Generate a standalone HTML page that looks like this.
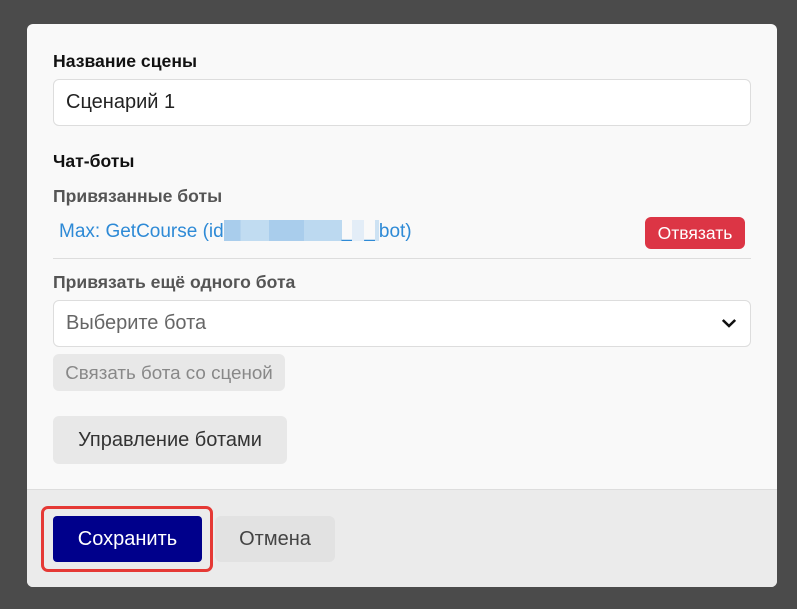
<!DOCTYPE html>
<html><head><meta charset="utf-8"><style>
html,body{margin:0;padding:0;width:797px;height:609px;background:#4b4b4b;overflow:hidden;font-family:"Liberation Sans",Arial,sans-serif}
.m{position:absolute;left:27px;top:24px;width:750px;height:563px;background:#f9f9f9;border-radius:6px;overflow:hidden}
.a{position:absolute;white-space:nowrap}
.lbl{font-weight:bold;font-size:17.6px;color:#111}
.lbl2{font-weight:bold;font-size:17.6px;color:#555}
.inp{background:#fff;border:1px solid #ddd;border-radius:6px;box-sizing:border-box}
.foot{position:absolute;left:0;top:465px;width:750px;height:98px;background:#ebebeb;border-top:1px solid #ddd}
</style></head><body>
<div class="m">
<div class="a lbl" style="left:26px;top:27px">Название сцены</div>
<div class="a inp" style="left:26px;top:55px;width:698px;height:47px"><span class="a" style="left:12px;top:11px;font-size:20px;color:#222">Сценарий 1</span></div>
<div class="a lbl" style="left:26px;top:127px">Чат-боты</div>
<div class="a lbl2" style="left:26px;top:162px">Привязанные боты</div>
<div class="a" style="left:32px;top:196px;font-size:19px;color:#2e8ad6">Max: GetCourse (id<span style="display:inline-block;width:118px;height:21px;vertical-align:-4px;background:linear-gradient(90deg,#a9cdec 0 14%,#c1dcf1 14% 38%,#a9cdec 38% 68%,#bcd9f0 68% 100%)"></span>_<span style="display:inline-block;width:12px;height:21px;vertical-align:-4px;background:#e3edf7"></span>_<span style="display:inline-block;width:4px;height:21px;vertical-align:-4px;background:#cde2f3"></span>bot)</div>
<div class="a" style="left:618px;top:193px;width:100px;height:32px;background:#dc3545;border-radius:6px;color:#fff;font-size:17.5px;text-align:center;line-height:32px">Отвязать</div>
<div class="a" style="left:26px;top:234px;width:698px;height:1px;background:#ddd"></div>
<div class="a lbl2" style="left:26px;top:248px">Привязать ещё одного бота</div>
<div class="a inp" style="left:26px;top:276px;width:698px;height:47px"><span class="a" style="left:12px;top:11px;font-size:20px;color:#666">Выберите бота</span>
<svg class="a" style="left:667px;top:16px" width="16" height="12" viewBox="0 0 16 12"><path d="M1.8 3 L8 9 L14.2 3" fill="none" stroke="#111" stroke-width="2.6"/></svg></div>
<div class="a" style="left:26px;top:330px;width:232px;height:37px;background:#e8e8e8;border-radius:6px;color:#888;font-size:18.8px;text-align:center;line-height:37px">Связать бота со сценой</div>
<div class="a" style="left:26px;top:392px;width:234px;height:48px;background:#e8e8e8;border-radius:6px;color:#333;font-size:20px;text-align:center;line-height:48px">Управление ботами</div>
<div class="foot">
<div class="a" style="left:14px;top:16px;width:172px;height:66px;box-sizing:border-box;border:3px solid #e53935;border-radius:7px"></div>
<div class="a" style="left:26px;top:26px;width:149px;height:46px;background:#00008b;border-radius:4px;color:#fff;font-size:20px;text-align:center;line-height:46px">Сохранить</div>
<div class="a" style="left:188px;top:26px;width:120px;height:46px;background:#e2e2e2;border-radius:6px;color:#444;font-size:20px;text-align:center;line-height:46px">Отмена</div>
</div>
</div>
</body></html>
